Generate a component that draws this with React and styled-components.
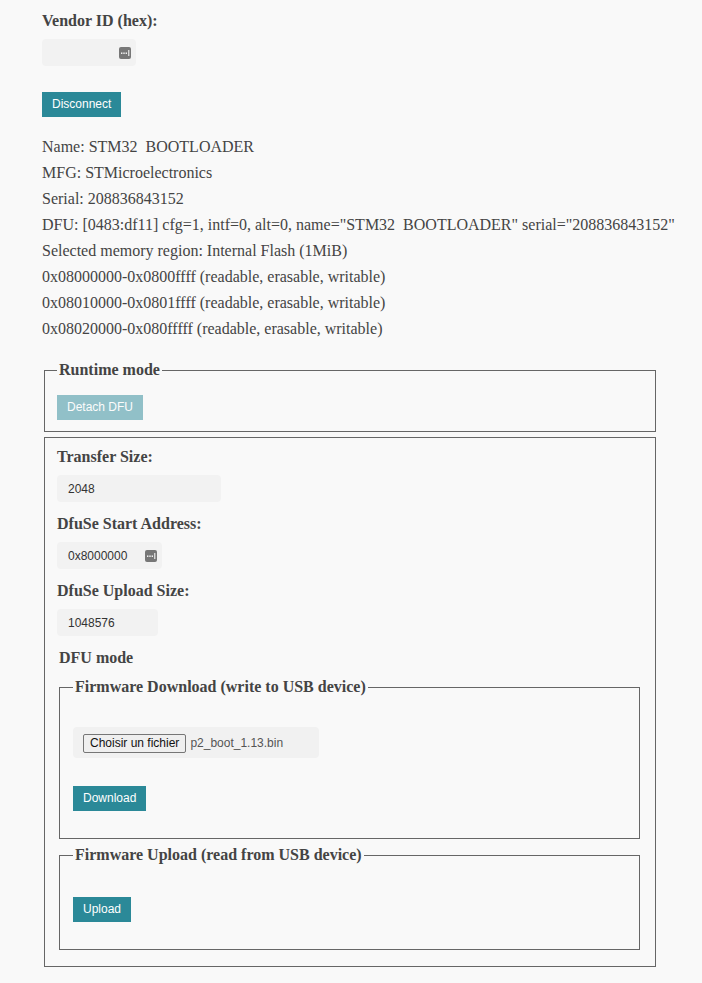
import React from 'react';
import styled, { createGlobalStyle } from 'styled-components';

const GlobalStyle = createGlobalStyle`
  body {
    margin: 0;
    background: #f9f9f9;
    color: #444;
    font-family: "Liberation Serif", "Times New Roman", serif;
    font-size: 16px;
  }
`;

const Page = styled.div`
  padding: 11px 44px 0 42px;
`;

const FieldLabel = styled.label`
  display: block;
  font-weight: bold;
  line-height: 20px;
  margin-bottom: ${(p) => p.$mb || 8}px;
  padding-left: ${(p) => p.$indent || 0}px;
`;

const InputBox = styled.div`
  display: flex;
  align-items: center;
  justify-content: space-between;
  box-sizing: border-box;
  width: ${(p) => p.$width}px;
  height: 27px;
  padding: 0 5px 0 11px;
  margin-bottom: 12px;
  background: #f2f2f2;
  border-radius: 4px;
  font-family: "Liberation Sans", Arial, sans-serif;
  font-size: 12px;
  color: #333;
`;

const Button = styled.button`
  display: block;
  border: none;
  border-radius: 0;
  background: #2b8998;
  color: #fff;
  font-family: "Liberation Sans", Arial, sans-serif;
  font-size: 12px;
  line-height: 15px;
  padding: 5px 10px;
  margin-top: ${(p) => p.$mt || 0}px;
  opacity: ${(p) => (p.disabled ? 0.5 : 1)};
`;

const InfoList = styled.div`
  margin-top: 17px;
  line-height: 26px;
  white-space: pre;
`;

const Fieldset = styled.fieldset`
  margin: ${(p) => p.$mt || 0}px ${(p) => p.$mr || 2}px 0 2px;
  border: 1px solid #666;
  padding: ${(p) => p.$pad};
  min-width: 0;
`;

const Legend = styled.legend`
  font-weight: bold;
  line-height: 20px;
  padding: 0 2px;
`;

const FileBox = styled.div`
  display: flex;
  align-items: center;
  gap: 4px;
  box-sizing: border-box;
  width: 246px;
  height: 31px;
  padding: 1px 10px 0;
  background: #f1f1f1;
  border-radius: 4px;
  font-family: "Liberation Sans", Arial, sans-serif;
  font-size: 12px;
  color: #555;
`;

const FileButton = styled.span`
  display: inline-block;
  box-sizing: border-box;
  height: 19px;
  line-height: 17px;
  padding: 0 6px;
  background: #efefef;
  border: 1px solid #767676;
  border-radius: 2px;
  color: #111;
`;

function FillIcon() {
  return (
    <svg width="12" height="12" viewBox="0 0 12 12">
      <rect x="0" y="0" width="12" height="12" rx="2" fill="#777" />
      <rect x="2" y="5.5" width="1.4" height="1.4" fill="#fff" />
      <rect x="4.3" y="5.5" width="1.4" height="1.4" fill="#fff" />
      <rect x="6.6" y="5.5" width="1.4" height="1.4" fill="#fff" />
      <rect x="9.3" y="3" width="1" height="6" fill="#fff" />
    </svg>
  );
}

const info = [
  'Name: STM32  BOOTLOADER',
  'MFG: STMicroelectronics',
  'Serial: 208836843152',
  'DFU: [0483:df11] cfg=1, intf=0, alt=0, name="STM32  BOOTLOADER" serial="208836843152"',
  'Selected memory region: Internal Flash (1MiB)',
  '0x08000000-0x0800ffff (readable, erasable, writable)',
  '0x08010000-0x0801ffff (readable, erasable, writable)',
  '0x08020000-0x080fffff (readable, erasable, writable)',
];

export default function App() {
  return (
    <>
      <GlobalStyle />
      <Page>
        <FieldLabel>Vendor ID (hex):</FieldLabel>
        <InputBox $width={94}>
          <span />
          <FillIcon />
        </InputBox>
        <Button $mt={26}>Disconnect</Button>

        <InfoList>
          {info.map((line) => (
            <div key={line}>{line}</div>
          ))}
        </InfoList>

        <Fieldset $mt={18} $pad="15px 12px 11px">
          <Legend>Runtime mode</Legend>
          <Button disabled>Detach DFU</Button>
        </Fieldset>

        <Fieldset $mt={5} $pad="9px 12px 16px">
          <FieldLabel>Transfer Size:</FieldLabel>
          <InputBox $width={164}>2048</InputBox>
          <FieldLabel>DfuSe Start Address:</FieldLabel>
          <InputBox $width={105}>
            <span>0x8000000</span>
            <FillIcon />
          </InputBox>
          <FieldLabel>DfuSe Upload Size:</FieldLabel>
          <InputBox $width={101}>1048576</InputBox>
          <FieldLabel $indent={2} $mb={9}>DFU mode</FieldLabel>

          <Fieldset $mr={3} $pad="30px 12px 27px 13px">
            <Legend>Firmware Download (write to USB device)</Legend>
            <FileBox>
              <FileButton>Choisir un fichier</FileButton>
              <span>p2_boot_1.13.bin</span>
            </FileBox>
            <Button $mt={28}>Download</Button>
          </Fieldset>

          <Fieldset $mt={6} $mr={3} $pad="32px 12px 27px 13px">
            <Legend>Firmware Upload (read from USB device)</Legend>
            <Button>Upload</Button>
          </Fieldset>
        </Fieldset>
      </Page>
    </>
  );
}
